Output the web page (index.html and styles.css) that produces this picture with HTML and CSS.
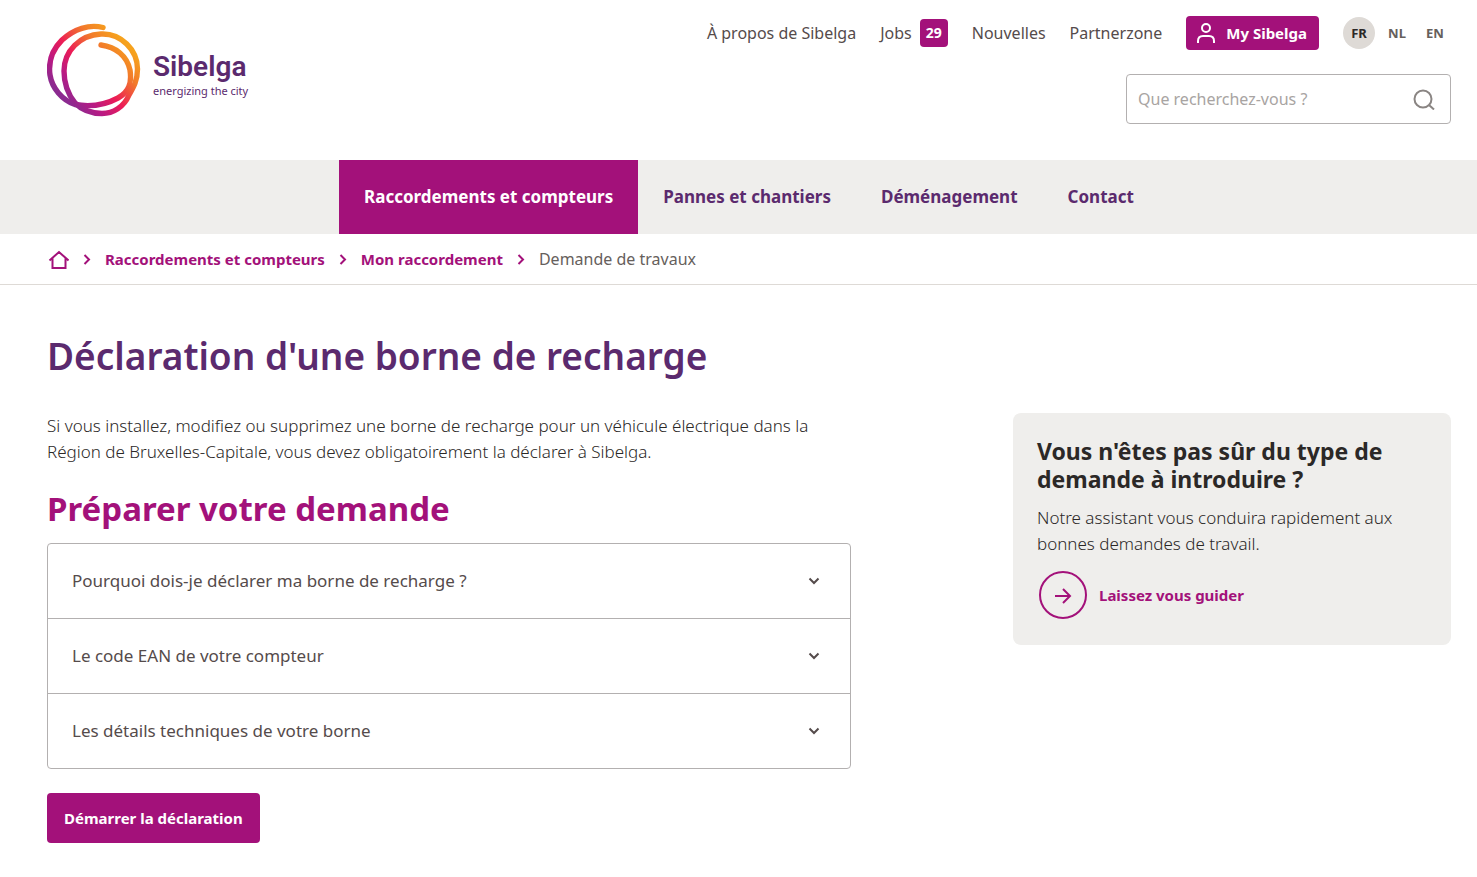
FILE: index.html
```html
<!DOCTYPE html>
<html lang="fr">
<head>
<meta charset="utf-8">
<meta name="viewport" content="width=device-width, initial-scale=1">
<title>Déclaration d'une borne de recharge - Sibelga</title>
<link rel="stylesheet" href="styles.css">
</head>
<body>
<header class="header wrap">
  <a class="logo" href="#" aria-label="Sibelga">
    <svg class="logo-mark" viewBox="0 0 94 94" width="94" height="94" fill="none" stroke="url(#ring)" stroke-width="5.400" stroke-linecap="round" aria-hidden="true">
      <defs>
        <linearGradient id="ring" gradientUnits="userSpaceOnUse" x1="20" y1="78" x2="80" y2="22">
          <stop offset="0" stop-color="#8b2a90"/>
          <stop offset=".2" stop-color="#b81a84"/>
          <stop offset=".45" stop-color="#ec1c56"/>
          <stop offset=".75" stop-color="#f2792b"/>
          <stop offset="1" stop-color="#f6a21d"/>
        </linearGradient>
      </defs>
      <path d="M56 4.500C42 1 27 6 15 17C6 26 1 38 3 52C5 65 15 77 28 81.500C42 84 58 82 71 75C82 69 85 60 83 47C80 33 69 24 54 22"/>
      <path d="M54 11C74 10 90.500 27 90.500 46C90.500 58 86 65 82 72C77 84 66 90.500 55 90.500C44 90.500 34 86 28 80C20 70 17 60 17 48C17 28 33 12 54 11Z"/>
    </svg>
    <span class="logo-text"><span class="logo-name">Sibelga</span><span class="logo-tag">energizing the city</span></span>
  </a>
  <div class="header-side">
    <div class="topbar">
      <nav class="toplinks" aria-label="Liens secondaires">
        <a href="#">À propos de Sibelga</a>
        <a class="jobs" href="#">Jobs <span class="badge">29</span></a>
        <a href="#">Nouvelles</a>
        <a href="#">Partnerzone</a>
      </nav>
      <a class="account" href="#">
        <svg width="20" height="22" viewBox="0 0 20 22" fill="none" stroke="currentColor" stroke-width="2" aria-hidden="true"><circle cx="10" cy="6" r="4"/><path d="M2 21v-2c0-3 2-5 5-5h6c3 0 5 2 5 5v2"/></svg>
        My Sibelga
      </a>
      <nav class="langs" aria-label="Langue">
        <a class="lang current" href="#" aria-current="true">FR</a>
        <a class="lang" href="#">NL</a>
        <a class="lang" href="#">EN</a>
      </nav>
    </div>
    <form class="search">
      <input class="search-input" type="text" placeholder="Que recherchez-vous ?" aria-label="Que recherchez-vous ?">
      <button class="search-button" type="button" aria-label="Rechercher">
        <svg width="22" height="22" viewBox="0 0 22 22" fill="none" stroke="currentColor" stroke-width="2" aria-hidden="true"><circle cx="10" cy="11" r="8.500"/><path d="M16 17l5 4.500"/></svg>
      </button>
    </form>
  </div>
</header>

<nav class="mainnav" aria-label="Navigation principale">
  <div class="wrap mainnav-list">
    <a class="mainnav-item active" href="#">Raccordements et compteurs</a>
    <a class="mainnav-item" href="#">Pannes et chantiers</a>
    <a class="mainnav-item" href="#">Déménagement</a>
    <a class="mainnav-item" href="#">Contact</a>
  </div>
</nav>

<nav class="crumbs" aria-label="Fil d'Ariane">
  <div class="wrap crumbs-list">
    <a class="home" href="#" aria-label="Accueil"><svg width="22" height="20" viewBox="0 0 22 20" fill="none" stroke="currentColor" stroke-width="2" aria-hidden="true"><path d="M2.500 11.500L12 3l9.500 8.500M5.500 9.500V19h13V9.500"/></svg></a>
    <svg class="sep" width="8" height="12" viewBox="0 0 8 12" fill="none" stroke="currentColor" stroke-width="2" aria-hidden="true"><path d="M1.500 2L6 6.500l-4.500 4.500"/></svg>
    <a href="#">Raccordements et compteurs</a>
    <svg class="sep" width="8" height="12" viewBox="0 0 8 12" fill="none" stroke="currentColor" stroke-width="2" aria-hidden="true"><path d="M1.500 2L6 6.500l-4.500 4.500"/></svg>
    <a href="#">Mon raccordement</a>
    <svg class="sep" width="8" height="12" viewBox="0 0 8 12" fill="none" stroke="currentColor" stroke-width="2" aria-hidden="true"><path d="M1.500 2L6 6.500l-4.500 4.500"/></svg>
    <span class="here" aria-current="page">Demande de travaux</span>
  </div>
</nav>

<main class="wrap page">
  <h1 class="title">Déclaration d'une borne de recharge</h1>
  <div class="columns">
    <div class="content">
      <p class="text">Si vous installez, modifiez ou supprimez une borne de recharge pour un véhicule électrique dans la Région de Bruxelles-Capitale, vous devez obligatoirement la déclarer à Sibelga.</p>
      <h2 class="subtitle">Préparer votre demande</h2>
      <div class="accordion">
        <button class="accordion-item" type="button" aria-expanded="false">Pourquoi dois-je déclarer ma borne de recharge ?<svg width="12" height="8" viewBox="0 0 12 8" fill="none" stroke="currentColor" stroke-width="2" aria-hidden="true"><path d="M1.500 1.500L6 6l4.500-4.500"/></svg></button>
        <button class="accordion-item" type="button" aria-expanded="false">Le code EAN de votre compteur<svg width="12" height="8" viewBox="0 0 12 8" fill="none" stroke="currentColor" stroke-width="2" aria-hidden="true"><path d="M1.500 1.500L6 6l4.500-4.500"/></svg></button>
        <button class="accordion-item" type="button" aria-expanded="false">Les détails techniques de votre borne<svg width="12" height="8" viewBox="0 0 12 8" fill="none" stroke="currentColor" stroke-width="2" aria-hidden="true"><path d="M1.500 1.500L6 6l4.500-4.500"/></svg></button>
      </div>
      <a class="start" href="#">Démarrer la déclaration</a>
    </div>
    <aside class="helper">
      <h3 class="helper-title">Vous n'êtes pas sûr du type de demande à introduire ?</h3>
      <p class="text">Notre assistant vous conduira rapidement aux bonnes demandes de travail.</p>
      <a class="guide" href="#">
        <span class="guide-icon"><svg width="18" height="18" viewBox="0 0 18 18" fill="none" stroke="currentColor" stroke-width="2" aria-hidden="true"><path d="M1 10h15M9 3l7 7-7 7"/></svg></span>
        Laissez vous guider
      </a>
    </aside>
  </div>
</main>
</body>
</html>
```
FILE: styles.css
```css
* {
  box-sizing: border-box;
}

:root {
  --magenta: #a3117a;
  --purple: #5b2a6e;
  --grey: #efeeec;
  --ink: #554b4b;
}

body {
  margin: 0;
  background: #fff;
  color: #2b2827;
  font-family: "Noto Sans", "Open Sans", sans-serif;
  font-size: 17px;
  line-height: 26px;
}

a {
  color: inherit;
  text-decoration: none;
}

h1, h2, h3, p {
  margin: 0;
}

svg {
  display: block;
  flex: none;
}

.wrap {
  padding: 0 26px 0 47px;
}

.header {
  display: flex;
  justify-content: space-between;
  align-items: flex-start;
  min-height: 160px;
}

.logo {
  display: flex;
  gap: 12px;
  padding-top: 23px;
  color: var(--purple);
}

.logo-text {
  display: flex;
  flex-direction: column;
  gap: 2px;
  padding-top: 28px;
}

.logo-name {
  font-family: Roboto, "Noto Sans", sans-serif;
  font-size: 28px;
  font-weight: 600;
  line-height: 32px;
}

.logo-tag {
  font-size: 11px;
  line-height: 12px;
}

.header-side {
  display: flex;
  flex-direction: column;
  align-items: flex-end;
  gap: 24px;
  padding-top: 16px;
}

.topbar,
.toplinks,
.jobs,
.account,
.langs {
  display: flex;
  align-items: center;
}

.topbar,
.toplinks {
  gap: 24px;
}

.toplinks {
  color: var(--ink);
  font-size: 16px;
}

.jobs {
  gap: 8px;
}

.badge {
  padding: 1px 6px;
  border-radius: 4px;
  background: var(--magenta);
  color: #fff;
  font-size: 14px;
  font-weight: 700;
}

.account {
  gap: 10px;
  height: 34px;
  padding: 0 12px 0 10px;
  border-radius: 4px;
  background: var(--magenta);
  color: #fff;
  font-size: 15px;
  font-weight: 700;
}

.langs {
  gap: 6px;
  color: #66605c;
  font-size: 13px;
  font-weight: 700;
}

.lang {
  width: 32px;
  border-radius: 50%;
  line-height: 32px;
  text-align: center;
}

.lang.current {
  background: #dedad6;
  color: #2b2827;
}

.search {
  display: flex;
  width: 325px;
  height: 50px;
  border: 1px solid #b3b0b0;
  border-radius: 4px;
}

.search-input {
  flex: 1;
  min-width: 0;
  padding: 0 11px;
  border: 0;
  background: none;
  font: inherit;
  font-size: 16px;
}

.search-input::placeholder {
  color: #a8a4a2;
  opacity: 1;
}

.search-button {
  padding: 0 15px;
  border: 0;
  background: none;
  color: #8a8583;
}

.mainnav {
  background: var(--grey);
}

.mainnav-list {
  display: flex;
  justify-content: center;
}

.mainnav-item {
  padding: 24px 25px;
  color: var(--purple);
  font-size: 17px;
  font-weight: 700;
}

.mainnav-item.active {
  background: var(--magenta);
  color: #fff;
}

.crumbs {
  border-bottom: 1px solid #dedad6;
}

.crumbs-list {
  display: flex;
  align-items: center;
  gap: 14px;
  height: 50px;
  color: var(--magenta);
  font-size: 15px;
  font-weight: 700;
}

.here {
  color: #66605c;
  font-size: 16px;
  font-weight: 400;
}

.page {
  padding-top: 46px;
  padding-bottom: 34px;
}

.title {
  color: var(--purple);
  font-size: 37px;
  font-weight: 600;
  line-height: 50px;
}

.columns {
  display: grid;
  grid-template-columns: 804fr 438fr;
  align-items: start;
  gap: 162px;
  padding-top: 32px;
}

.text {
  font-weight: 300;
}

.subtitle {
  padding: 24px 0 14px;
  color: var(--magenta);
  font-size: 33px;
  font-weight: 700;
  line-height: 40px;
}

.accordion {
  border: 1px solid #b3b0b0;
  border-radius: 4px;
}

.accordion-item {
  display: flex;
  justify-content: space-between;
  align-items: center;
  width: 100%;
  padding: 24px 30px 24px 24px;
  border: 0;
  background: none;
  color: var(--ink);
  font: inherit;
  text-align: left;
}

.accordion-item + .accordion-item {
  border-top: 1px solid #b3b0b0;
}

.start {
  display: inline-block;
  margin-top: 24px;
  padding: 12px 17px;
  border-radius: 4px;
  background: var(--magenta);
  color: #fff;
  font-size: 15px;
  font-weight: 700;
}

.helper {
  padding: 24px 24px 26px;
  border-radius: 8px;
  background: var(--grey);
}

.helper-title {
  padding-bottom: 12px;
  font-size: 23px;
  font-weight: 700;
  line-height: 28px;
}

.guide {
  display: flex;
  align-items: center;
  gap: 12px;
  padding: 14px 2px 0;
  color: var(--magenta);
  font-size: 15px;
  font-weight: 700;
}

.guide-icon {
  display: grid;
  place-items: center;
  width: 48px;
  height: 48px;
  border: 2px solid;
  border-radius: 50%;
}
```
